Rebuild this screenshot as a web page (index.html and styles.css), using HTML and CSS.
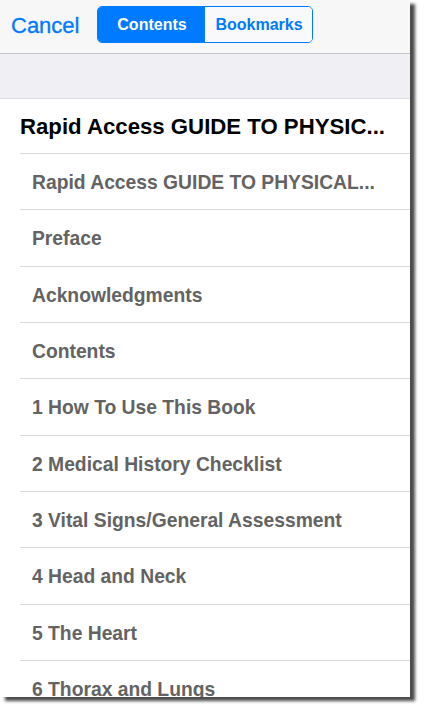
FILE: index.html
```html
<!DOCTYPE html>
<html>
<head>
<meta charset="utf-8">
<link rel="stylesheet" href="styles.css">
</head>
<body>
<div class="panel">
  <header class="navbar">
    <span class="cancel">Cancel</span>
    <div class="segmented">
      <span class="seg active">Contents</span>
      <span class="seg">Bookmarks</span>
    </div>
  </header>
  <div class="band"></div>
  <ul class="list">
    <li class="row title"><span>Rapid Access GUIDE TO PHYSIC...</span></li>
    <li class="row"><span>Rapid Access GUIDE TO PHYSICAL...</span></li>
    <li class="row"><span>Preface</span></li>
    <li class="row"><span>Acknowledgments</span></li>
    <li class="row"><span>Contents</span></li>
    <li class="row"><span>1 How To Use This Book</span></li>
    <li class="row"><span>2 Medical History Checklist</span></li>
    <li class="row"><span>3 Vital Signs/General Assessment</span></li>
    <li class="row"><span>4 Head and Neck</span></li>
    <li class="row"><span>5 The Heart</span></li>
    <li class="row"><span>6 Thorax and Lungs</span></li>
  </ul>
</div>
</body>
</html>
```

FILE: styles.css
```css
html, body {
  margin: 0;
  padding: 0;
  background: #ffffff;
  font-family: "Liberation Sans", Arial, sans-serif;
}
body {
  width: 426px;
  height: 711px;
  overflow: hidden;
}
.panel {
  width: 410px;
  height: 697px;
  background: #ffffff;
  overflow: hidden;
  box-shadow: 5px 4px 3px rgba(30, 30, 30, 0.8);
}
.navbar {
  height: 53px;
  background: #f7f7f7;
  border-bottom: 1px solid #c4c4c8;
  display: flex;
  align-items: flex-start;
}
.cancel {
  color: #007aff;
  font-size: 22px;
  margin-left: 11px;
  margin-top: 13px;
  -webkit-text-stroke: 0.3px #007aff;
}
.segmented {
  margin-left: 18px;
  margin-top: 6px;
  display: flex;
  height: 37px;
  border: 1px solid #007aff;
  border-radius: 5px;
  overflow: hidden;
  box-sizing: border-box;
}
.seg {
  width: 107px;
  display: flex;
  align-items: center;
  justify-content: center;
  font-size: 16px;
  font-weight: bold;
  color: #007aff;
  background: #f9f9fb;
}
.seg.active {
  background: #007aff;
  color: #ffffff;
}
.band {
  height: 44px;
  background: #efeff4;
  border-bottom: 1px solid #dcdce0;
}
.list {
  list-style: none;
  margin: 0;
  padding: 0 0 0 20px;
}
.row {
  height: 56.33px;
  box-sizing: border-box;
  border-bottom: 1px solid #d9d9dd;
  display: flex;
  align-items: center;
  padding-left: 12px;
  padding-top: 3px;
  font-size: 19.3px;
  font-weight: bold;
  color: #636363;
  white-space: nowrap;
}
.row.title {
  height: 55px;
  padding-left: 0;
  padding-top: 2px;
  font-size: 22.2px;
  color: #000000;
}
```
